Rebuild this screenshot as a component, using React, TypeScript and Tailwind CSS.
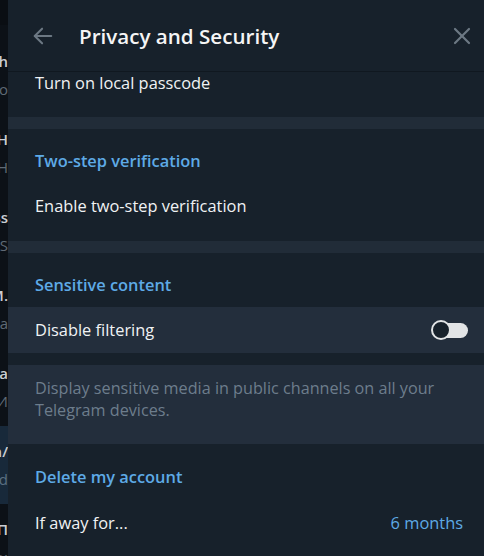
import React from "react";

const CHATS = [
  { name: "Fresh", msg: "Archive pro" },
  { name: "Channel H", msg: "Photo H" },
  { name: "Boss", msg: "Docs S" },
  { name: "Группа М.", msg: "Привет, а" },
  { name: "Работа Ва", msg: "Ответ И" },
  { name: "Design n/", msg: "Sent d", active: true },
  { name: "Прогресс П", msg: "Фото:" },
];

function ChatStrip() {
  return (
    <div className="w-[8px] shrink-0 overflow-hidden bg-[#0c1117] flex flex-col">
      <div className="h-[25px] shrink-0 bg-[#0a0e13]" />
      <div className="h-[11px] shrink-0" />
      {CHATS.map((c) => (
        <div
          key={c.name}
          className={`h-[78px] shrink-0 flex flex-col justify-center items-end gap-[8px] ${
            c.active ? "bg-[#18293a]" : ""
          }`}
        >
          <div className="whitespace-nowrap text-[15px] leading-[20px] font-semibold text-[#c9ced3]">{c.name}</div>
          <div className={`whitespace-nowrap text-[15px] leading-[20px] ${c.active ? "text-[#5b6f82]" : "text-[#5f6a75]"}`}>
            {c.msg}
          </div>
        </div>
      ))}
    </div>
  );
}

function SectionHeader({ children, last }: { children: React.ReactNode; last?: boolean }) {
  return (
    <div
      className={`shrink-0 px-[27px] text-[16.4px] leading-[22px] font-semibold text-[#5eaae6] ${
        last ? "h-[56px] pt-[22px]" : "h-[54px] pt-[21px]"
      }`}
    >
      {children}
    </div>
  );
}

function Row({
  children,
  right,
  hover,
}: {
  children: React.ReactNode;
  right?: React.ReactNode;
  hover?: boolean;
}) {
  return (
    <div
      className={`h-[46px] shrink-0 pl-[27px] flex items-center justify-between ${
        hover ? "bg-[#232e3c] pr-[16px]" : "pr-[21px]"
      }`}
    >
      <span className="text-[16.4px] leading-[22px] text-[#f0f2f4]">{children}</span>
      {right}
    </div>
  );
}

function Divider() {
  return <div className="h-[12px] shrink-0 bg-[#212c38]" />;
}

function Toggle() {
  return (
    <div className="relative w-[37px] h-[20px] flex items-center">
      <div className="absolute left-[2px] right-0 h-[15px] rounded-full bg-[#e2e4e6]" />
      <div className="absolute left-0 w-[20px] h-[20px] rounded-full bg-[#17212b] border-[2px] border-[#e2e4e6]" />
    </div>
  );
}

export default function App() {
  return (
    <div
      className="w-[484px] h-[556px] flex overflow-hidden bg-[#17212b]"
      style={{ fontFamily: '"Open Sans", "Noto Sans", sans-serif' }}
    >
      <ChatStrip />
      <div className="flex-1 flex flex-col bg-[#17212b] min-w-0">
        <div className="h-[72px] shrink-0 flex items-center border-b border-[#101820] pl-[24px] pr-[13px]">
          <svg width="22" height="22" viewBox="0 0 24 24" fill="none" stroke="#6c7883" strokeWidth="2.2" strokeLinecap="round" strokeLinejoin="round">
            <path d="M21 12H3" />
            <path d="M11 4l-8 8 8 8" />
          </svg>
          <div className="ml-[25px] text-[20.6px] leading-[28px] font-semibold text-[#f5f5f5]">Privacy and Security</div>
          <div className="ml-auto">
            <svg width="18" height="18" viewBox="0 0 18 18" fill="none" stroke="#6c7883" strokeWidth="2.2" strokeLinecap="round">
              <path d="M2 2l14 14" />
              <path d="M16 2L2 16" />
            </svg>
          </div>
        </div>
        <div className="flex-1 overflow-hidden flex flex-col">
          <div className="-mt-[12px] flex flex-col">
            <Row>Turn on local passcode</Row>
            <div className="h-[11px] shrink-0" />
            <Divider />

            <SectionHeader>Two-step verification</SectionHeader>
            <Row>Enable two-step verification</Row>
            <div className="h-[12px] shrink-0" />
            <Divider />

            <SectionHeader>Sensitive content</SectionHeader>
            <Row hover right={<Toggle />}>
              Disable filtering
            </Row>
            <div className="h-[12px] shrink-0" />
            <div className="shrink-0 bg-[#232e3c] px-[27px] pt-[12px] pb-[23px] text-[16.2px] leading-[22px] text-[#6d7d8c]">
              Display sensitive media in public channels on all your Telegram devices.
            </div>

            <SectionHeader last>Delete my account</SectionHeader>
            <Row right={<span className="text-[16.4px] leading-[22px] text-[#5eaae6]">6 months</span>}>If away for...</Row>
          </div>
        </div>
      </div>
    </div>
  );
}
